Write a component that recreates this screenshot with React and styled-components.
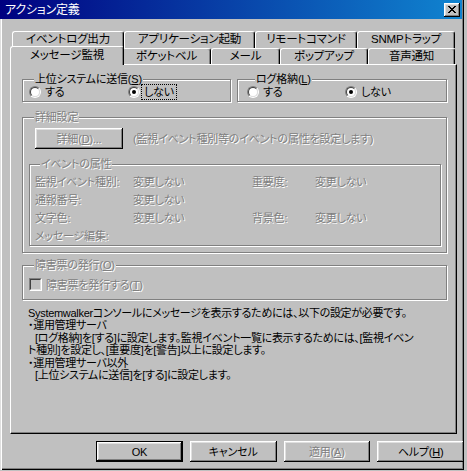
import styled, { createGlobalStyle, css } from 'styled-components'

const GlobalStyle = createGlobalStyle`
  html, body { margin: 0; padding: 0; background: #c0c0c0; }
  body {
    font-family: "Liberation Sans", "Noto Sans CJK JP", sans-serif;
    font-size: 11px;
    line-height: 12px;
    letter-spacing: -0.2px;
    font-feature-settings: "palt";
    color: #000;
  }
  * { box-sizing: border-box; }
`

const Window = styled.div`
  width: 464px;
  height: 470px;
  background: #c0c0c0;
  box-shadow: inset 1px 0 0 #dfdfdf, inset 2px 0 0 #fff,
    inset -1px -1px 0 #000, inset -2px -2px 0 #808080;
  display: flex;
  flex-direction: column;
`

const TitleBar = styled.div`
  height: 19px;
  margin-right: 2px;
  background: linear-gradient(to right, #000080, #1084d0);
  display: flex;
  align-items: center;
  padding: 0 2px 0 5px;
`

const Title = styled.span`
  flex: 1;
  color: #fff;
  font-size: 12px;
`

const CloseButton = styled.div`
  width: 16px;
  height: 14px;
  background: #c0c0c0;
  box-shadow: inset -1px -1px 0 #000, inset 1px 1px 0 #fff,
    inset -2px -2px 0 #808080, inset 2px 2px 0 #dfdfdf;
  display: flex;
  align-items: center;
  justify-content: center;
  padding: 0 1px 1px 0;
`

const Body = styled.div`
  padding: 12px 0 0 10px;
`

const TabRow = styled.div`
  display: flex;
  height: ${p => p.h}px;
  padding-left: 2px;
  width: 447px;
`

const Tab = styled.div`
  width: ${p => p.w}px;
  height: 100%;
  flex: none;
  display: flex;
  align-items: center;
  justify-content: center;
  padding-bottom: 2px;
  background: #c0c0c0;
  border-top: 1px solid #fff;
  border-left: 1px solid #fff;
  border-right: 1px solid #000;
  border-radius: 3px 3px 0 0;
  box-shadow: inset -1px 0 0 #808080;
  white-space: nowrap;
  font-size: 11.5px;
  ${p => p.selected && css`
    position: relative;
    z-index: 1;
    width: ${p.w + 4}px;
    height: 19px;
    margin: -2px -2px 0 -2px;
    padding-bottom: 3px;
  `}
`

const Panel = styled.div`
  width: 447px;
  height: 370px;
  border-top: 1px solid #fff;
  border-left: 1px solid #fff;
  border-right: 1px solid #000;
  border-bottom: 1px solid #000;
  box-shadow: inset -1px -1px 0 #808080;
  padding: 14px 9px 0 11px;
  display: flex;
  flex-direction: column;
`

const GroupRow = styled.div`
  display: flex;
  gap: 6px;
`

const Group = styled.div`
  width: ${p => (p.w ? `${p.w}px` : 'auto')};
  margin-top: ${p => p.mt || 0}px;
  border: 1px solid #808080;
  box-shadow: inset 1px 1px 0 #fff, 1px 1px 0 #fff;
  display: flex;
  flex-direction: column;
  align-items: flex-start;
  padding: 0 ${p => p.pr || 0}px ${p => p.pb || 0}px ${p => p.pl || 0}px;
`

const disabledText = css`
  color: #808080;
  text-shadow: 1px 1px 0 #fff;
`

const Caption = styled.div`
  margin: -7px 0 0 ${p => p.ml || 5}px;
  padding: 0 1px;
  background: #c0c0c0;
  white-space: nowrap;
  ${p => p.disabled && disabledText}
`

const RadioLine = styled.div`
  display: flex;
`

const RadioItem = styled.label`
  width: ${p => p.w}px;
  display: flex;
  align-items: center;
  gap: 2px;
`

const RadioDot = styled.span`
  position: relative;
  flex: none;
  width: 12px;
  height: 12px;
  border-radius: 50%;
  border: 1px solid;
  border-color: #808080 #fff #fff #808080;
  &::before {
    content: '';
    position: absolute;
    inset: 0;
    border-radius: 50%;
    border: 1px solid;
    border-color: #404040 #dfdfdf #dfdfdf #404040;
    background: #fff;
  }
  ${p => p.checked && css`
    &::after {
      content: '';
      position: absolute;
      left: 3px;
      top: 3px;
      width: 4px;
      height: 4px;
      border-radius: 50%;
      background: #000;
    }
  `}
`

const RadioText = styled.span`
  padding: 1px 2px;
  outline: ${p => (p.focused ? '1px dotted #000' : 'none')};
`

const DetailRow = styled.div`
  display: flex;
  align-items: center;
  margin-top: 5px;
`

const Button = styled.div`
  width: ${p => p.w}px;
  height: 21px;
  display: flex;
  align-items: center;
  justify-content: center;
  background: #c0c0c0;
  box-shadow: inset -1px -1px 0 #000, inset 1px 1px 0 #fff,
    inset -2px -2px 0 #808080, inset 2px 2px 0 #dfdfdf;
  white-space: nowrap;
  ${p => p.isDefault && css`
    border: 1px solid #000;
  `}
  ${p => p.disabled && disabledText}
`

const Note = styled.span`
  margin-left: 10px;
  white-space: nowrap;
  ${disabledText}
`

const AttrGrid = styled.div`
  align-self: stretch;
  display: grid;
  grid-template-columns: 98px 119px 63px 1fr;
  row-gap: 6px;
  margin-top: 6px;
  white-space: nowrap;
  ${disabledText}
`

const CheckLine = styled.div`
  display: flex;
  align-items: center;
  gap: 4px;
  margin-top: 7px;
`

const CheckBox = styled.span`
  position: relative;
  flex: none;
  width: 13px;
  height: 13px;
  border: 1px solid;
  border-color: #808080 #fff #fff #808080;
  &::before {
    content: '';
    position: absolute;
    inset: 0;
    border: 1px solid;
    border-color: #404040 #dfdfdf #dfdfdf #404040;
    background: #c0c0c0;
  }
`

const CheckText = styled.span`
  ${disabledText}
`

const Help = styled.div`
  margin: 7px 0 0 6px;
  display: flex;
  flex-direction: column;
  letter-spacing: -0.3px;
`

const Line = styled.div`
  white-space: nowrap;
  padding-left: ${p => (p.indent ? 7 : 0)}px;
  line-height: 12.4px;
`

const ButtonRow = styled.div`
  display: flex;
  gap: 7px;
  margin-top: 7px;
  padding-left: 86px;
`

const xPattern = [
  'XX....XX',
  '.XX..XX.',
  '..XXXX..',
  '...XX...',
  '..XXXX..',
  '.XX..XX.',
  'XX....XX',
]

function CloseGlyph() {
  const rects = []
  xPattern.forEach((row, y) => {
    row.split('').forEach((c, x) => {
      if (c === 'X') rects.push(<rect key={`${x}-${y}`} x={x} y={y} width="1" height="1" fill="#000" />)
    })
  })
  return (
    <svg width="8" height="7" viewBox="0 0 8 7" shapeRendering="crispEdges">
      {rects}
    </svg>
  )
}

const row1 = [
  ['イベントログ出力', 112],
  ['アプリケーション起動', 131],
  ['リモートコマンド', 102],
  ['SNMPトラップ', 98],
]

const row2 = [
  ['メッセージ監視', 110, true],
  ['ポケットベル', 89],
  ['メール', 69],
  ['ポップアップ', 88],
  ['音声通知', 87],
]

function Radio({ label, checked, focused, w }) {
  return (
    <RadioItem w={w}>
      <RadioDot checked={checked} />
      <RadioText focused={focused}>{label}</RadioText>
    </RadioItem>
  )
}

export default function App() {
  return (
    <>
      <GlobalStyle />
      <Window>
        <TitleBar>
          <Title>アクション定義</Title>
          <CloseButton><CloseGlyph /></CloseButton>
        </TitleBar>
        <Body>
          <TabRow h={17}>
            {row1.map(([t, w]) => <Tab key={t} w={w}>{t}</Tab>)}
          </TabRow>
          <TabRow h={16}>
            {row2.map(([t, w, sel]) => <Tab key={t} w={w} selected={sel}>{t}</Tab>)}
          </TabRow>
          <Panel>
            <GroupRow>
              <Group w={209} pl={6} pb={2}>
                <Caption>上位システムに送信(<u>S</u>)</Caption>
                <RadioLine>
                  <Radio w={99} label="する" />
                  <Radio w={80} label="しない" checked focused />
                </RadioLine>
              </Group>
              <Group w={210} pl={9} pb={2}>
                <Caption ml={8}>ログ格納(<u>L</u>)</Caption>
                <RadioLine>
                  <Radio w={98} label="する" />
                  <Radio w={80} label="しない" checked />
                </RadioLine>
              </Group>
            </GroupRow>

            <Group mt={15} pl={6} pr={5} pb={6}>
              <Caption disabled>詳細設定</Caption>
              <DetailRow>
                <Button w={88} disabled style={{ marginLeft: 6 }}>詳細(<u>D</u>)...</Button>
                <Note>(監視イベント種別等のイベントの属性を設定します)</Note>
              </DetailRow>
              <Group w={412} mt={15} pl={5} pb={3}>
                <Caption disabled>イベントの属性</Caption>
                <AttrGrid>
                  <span>監視イベント種別:</span><span>変更しない</span><span>重要度:</span><span>変更しない</span>
                  <span>通報番号:</span><span>変更しない</span><span /><span />
                  <span>文字色:</span><span>変更しない</span><span>背景色:</span><span>変更しない</span>
                  <span>メッセージ編集:</span><span /><span /><span />
                </AttrGrid>
              </Group>
            </Group>

            <Group mt={12} pl={6} pb={8}>
              <Caption disabled>障害票の発行(<u>O</u>)</Caption>
              <CheckLine>
                <CheckBox />
                <CheckText>障害票を発行する(<u>T</u>)</CheckText>
              </CheckLine>
            </Group>

            <Help>
              <Line>Systemwalkerコンソールにメッセージを表示するためには、以下の設定が必要です。</Line>
              <Line>・運用管理サーバ</Line>
              <Line indent>[ログ格納]を[する]に設定します。監視イベント一覧に表示するためには、[監視イベン</Line>
              <Line>ト種別]を設定し、[重要度]を[警告]以上に設定します。</Line>
              <Line>・運用管理サーバ以外</Line>
              <Line indent>[上位システムに送信]を[する]に設定します。</Line>
            </Help>
          </Panel>
          <ButtonRow>
            <Button w={87} isDefault>OK</Button>
            <Button w={87}>キャンセル</Button>
            <Button w={87} disabled>適用(<u>A</u>)</Button>
            <Button w={87}>ヘルプ(<u>H</u>)</Button>
          </ButtonRow>
        </Body>
      </Window>
    </>
  )
}
